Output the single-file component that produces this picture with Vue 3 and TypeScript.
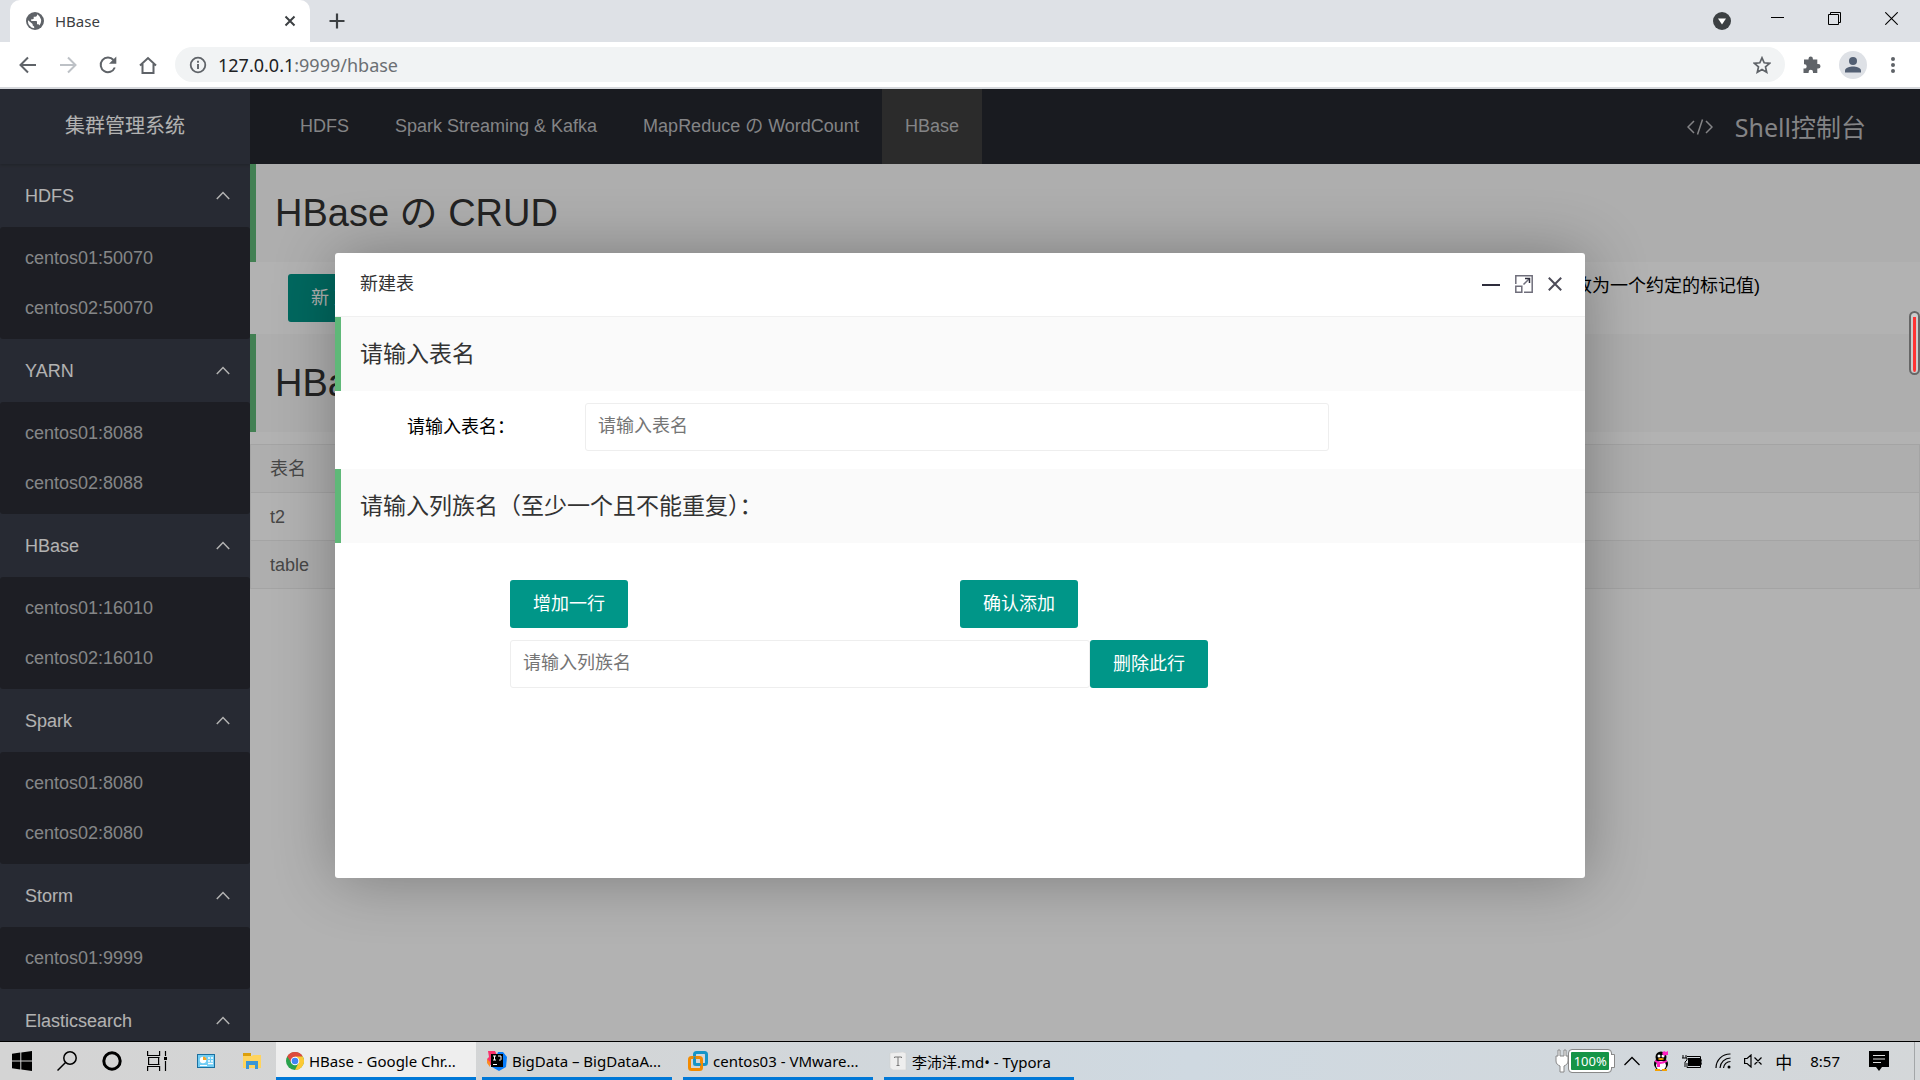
<script setup lang="ts">
import { ref } from 'vue'

interface NavGroup {
  title: string
  nodes: string[]
}

const groups: NavGroup[] = [
  { title: 'HDFS', nodes: ['centos01:50070', 'centos02:50070'] },
  { title: 'YARN', nodes: ['centos01:8088', 'centos02:8088'] },
  { title: 'HBase', nodes: ['centos01:16010', 'centos02:16010'] },
  { title: 'Spark', nodes: ['centos01:8080', 'centos02:8080'] },
  { title: 'Storm', nodes: ['centos01:9999'] },
  { title: 'Elasticsearch', nodes: [] },
]

const menu = ['HDFS', 'Spark Streaming & Kafka', 'MapReduce の WordCount', 'HBase']
const activeMenu = ref('HBase')
const tables = ['t2', 'table']

const tableName = ref('')
const families = ref<string[]>([''])

function addFamily() {
  families.value.push('')
}
function removeFamily(index: number) {
  families.value.splice(index, 1)
}
</script>

<template>
  <div class="desktop">
    <!-- browser tab strip -->
    <div class="tabstrip">
      <div class="tab">
        <svg class="globe" viewBox="0 0 18 18" width="18" height="18">
          <circle cx="9" cy="9" r="9" fill="#5f6368" />
          <path d="M2 8.2 6.6 12v1.2l1.6 1.5v1.6A7.3 7.3 0 0 1 2 8.2ZM11 2.2v.9c0 .9-.7 1.600-1.600 1.600H7.700v1.700c0 .5-.4.8-.9.8H5.200v1.700h5c.5 0 .8.400.8.900v2.500h.9c.7 0 1.300.5 1.500 1.100A7.200 7.200 0 0 0 11 2.200Z" fill="#fff" />
        </svg>
        <span class="tab-title">HBase</span>
        <button class="plain" type="button" aria-label="Close tab">
          <svg viewBox="0 0 12 12" width="12" height="12"><path d="M1.500 1.500l9 9M10.500 1.500l-9 9" stroke="#3c4043" stroke-width="2" /></svg>
        </button>
      </div>
      <button class="plain new-tab" type="button" aria-label="New tab">
        <svg viewBox="0 0 16 16" width="16" height="16"><path d="M8 0.500v15M0.500 8h15" stroke="#3c4043" stroke-width="2.200" /></svg>
      </button>
      <div class="window-controls">
        <svg viewBox="0 0 18 18" width="18" height="18"><circle cx="9" cy="9" r="9" fill="#3c4043" /><path d="M5 6.500h8L9 12.500Z" fill="#fff" /></svg>
        <svg class="win" viewBox="0 0 13 13" width="13" height="13"><path d="M0 5.500h13" stroke="#000" /></svg>
        <svg class="win" viewBox="0 0 13 13" width="13" height="13"><path d="M.5 2.500h10v10h-10zM2.500 2.500v-2h10v10h-2" stroke="#000" fill="none" /></svg>
        <svg class="win" viewBox="0 0 13 13" width="13" height="13"><path d="M.3.3l12.400 12.400M12.700.3L.3 12.700" stroke="#000" stroke-width="1.100" /></svg>
      </div>
    </div>

    <!-- browser toolbar -->
    <div class="toolbar">
      <div class="tool-icons">
        <svg viewBox="0 0 18 18" width="18" height="18"><path d="M17 9H2M9 1.500 1.500 9 9 16.500" fill="none" stroke="#5f6368" stroke-width="2" /></svg>
        <svg viewBox="0 0 18 18" width="18" height="18"><path d="M1 9h15M9 1.500 16.500 9 9 16.500" fill="none" stroke="#bdc1c6" stroke-width="2" /></svg>
        <svg viewBox="0 0 18 18" width="18" height="18"><path d="M15.800 11.500A7.300 7.300 0 1 1 14.500 4" fill="none" stroke="#5f6368" stroke-width="2" /><path d="M17.300.5v7.300H10Z" fill="#5f6368" /></svg>
        <svg viewBox="0 0 18 18" width="18" height="18"><path d="M1 9.500 9 2l8 7.500M3.500 8v9h11V8" fill="none" stroke="#5f6368" stroke-width="2" /></svg>
      </div>
      <div class="omnibox">
        <svg viewBox="0 0 18 18" width="18" height="18"><circle cx="9" cy="9" r="7.300" fill="none" stroke="#5f6368" stroke-width="1.800" /><path d="M9 8v5M9 4.800v1.900" stroke="#5f6368" stroke-width="1.900" /></svg>
        <span class="url">127.0.0.1<span class="path">:9999/hbase</span></span>
        <svg viewBox="0 0 18 18" width="18" height="18"><path d="m9 1.800 2.200 5 5.400.5-4.100 3.600 1.200 5.300L9 13.400l-4.700 2.800 1.200-5.300L1.400 7.300l5.400-.5Z" fill="none" stroke="#5f6368" stroke-width="1.700" /></svg>
      </div>
      <div class="profile">
        <svg viewBox="0 0 18 18" width="18" height="18"><path d="M1 3.500h4.500V2.700a2.200 2.200 0 0 1 4.400 0v.8h4.400V8h1a2.200 2.200 0 0 1 0 4.400h-1V17H10v-1a2.200 2.200 0 0 0-4.400 0v1H.5v-4.400h1a2.200 2.200 0 0 0 0-4.400H1Z" fill="#5f6368" /></svg>
        <svg viewBox="0 0 28 28" width="28" height="28"><circle cx="14" cy="14" r="14" fill="#dee1e6" /><circle cx="14" cy="10" r="4" fill="#525f73" /><path d="M6 21.500v-2c0-2.700 5-4 8-4s8 1.300 8 4v2Z" fill="#525f73" /></svg>
        <svg viewBox="0 0 4 18" width="4" height="18"><circle cx="2" cy="3" r="2" fill="#5f6368" /><circle cx="2" cy="9" r="2" fill="#5f6368" /><circle cx="2" cy="15" r="2" fill="#5f6368" /></svg>
      </div>
    </div>

    <!-- web page -->
    <div class="page">
      <aside class="sidebar">
        <div class="logo">集群管理系统</div>
        <nav>
          <section v-for="group in groups" :key="group.title">
            <a class="group-title" href="#">
              {{ group.title }}
              <svg viewBox="0 0 14 9" width="14" height="9"><path d="M.8 8 7 1.500 13.200 8" fill="none" stroke="#fff" stroke-width="1.500" /></svg>
            </a>
            <div v-if="group.nodes.length" class="group-nodes">
              <a v-for="node in group.nodes" :key="node" href="#">{{ node }}</a>
            </div>
          </section>
        </nav>
      </aside>

      <div class="content">
        <header class="topbar">
          <nav class="menu">
            <a v-for="item in menu" :key="item" href="#" :class="{ active: item === activeMenu }">{{ item }}</a>
          </nav>
          <a class="shell" href="#">
            <svg viewBox="0 0 26 16" width="26" height="16"><path d="M7 2 1 8l6 6M19 2l6 6-6 6M15.500.5l-5 15" fill="none" stroke="currentColor" stroke-width="1.500" /></svg>
            Shell控制台
          </a>
        </header>
        <main>
          <h1>HBase の CRUD</h1>
          <div class="actions">
            <button class="btn" type="button">新 建 表</button>
            <p>改为一个约定的标记值)</p>
          </div>
          <h1>HBase の 表</h1>
          <table>
            <thead><tr><th>表名</th></tr></thead>
            <tbody>
              <tr v-for="name in tables" :key="name"><td>{{ name }}</td></tr>
            </tbody>
          </table>
        </main>
      </div>

      <div class="shade">
        <div class="dialog" role="dialog" aria-labelledby="dialog-title">
          <div class="dialog-head">
            <span id="dialog-title">新建表</span>
            <div class="dialog-tools">
              <button class="plain" type="button" aria-label="最小化"><svg viewBox="0 0 18 18" width="18" height="18"><path d="M0 10h18" stroke="#2e2d3c" stroke-width="2" /></svg></button>
              <button class="plain" type="button" aria-label="最大化"><svg viewBox="0 0 18 18" width="18" height="18" fill="none" stroke="#6f6e7b" stroke-width="1.500"><path d="M.8 9V.8h16.400v16.400H9M.8 11.200h6v6h-6ZM8.500 9.500l6-6" /><path d="M10 3.500h4.500V8" stroke="#2e2d3c" /></svg></button>
              <button class="plain" type="button" aria-label="关闭"><svg viewBox="0 0 14 14" width="14" height="14"><path d="M.8.8l12.400 12.400M13.200.8.8 13.200" stroke="#4c4b58" stroke-width="2" /></svg></button>
            </div>
          </div>
          <h2>请输入表名</h2>
          <div class="form-row">
            <label for="table-name">请输入表名：</label>
            <input id="table-name" v-model="tableName" type="text" placeholder="请输入表名" />
          </div>
          <h2>请输入列族名（至少一个且不能重复）：</h2>
          <div class="families">
            <div class="family-actions">
              <div><button class="btn" type="button" @click="addFamily">增加一行</button></div>
              <div><button class="btn" type="button">确认添加</button></div>
            </div>
            <div v-for="(_, index) in families" :key="index" class="family-row">
              <input v-model="families[index]" type="text" placeholder="请输入列族名" aria-label="请输入列族名" />
              <button class="btn" type="button" @click="removeFamily(index)">删除此行</button>
            </div>
          </div>
        </div>
        <div class="scroll-thumb"></div>
      </div>
    </div>

    <!-- system taskbar -->
    <footer class="taskbar">
      <div class="launchers">
        <svg viewBox="0 0 20 20" width="20" height="20"><path d="M0 2.700 8.300 1.500v8H0ZM9.300 1.400 20 0v9.500H9.300ZM0 10.500h8.300v8L0 17.300ZM9.300 10.500H20V20L9.300 18.600Z" /></svg>
        <svg viewBox="0 0 20 20" width="20" height="20" fill="none" stroke="#000" stroke-width="1.500"><circle cx="13" cy="7" r="6.200" /><path d="M8.500 11.500.5 19.500" /></svg>
        <svg viewBox="0 0 20 20" width="20" height="20" fill="none" stroke="#000" stroke-width="3"><circle cx="10" cy="10" r="8.200" /></svg>
        <svg viewBox="0 0 20 20" width="20" height="20" fill="none" stroke="#000" stroke-width="1.200"><path d="M.6 0v4.500h12V0M.6 20v-4.500h12V20M1.600 6v8M11.600 6v8M1 6.500h11.500M1 13.500h11.500M18.500 0v5M18.500 10v10" /><path d="M17 6h3v3h-3z" fill="#000" stroke="none" /></svg>
        <svg class="panel" viewBox="0 0 18 14" width="18" height="14"><path d="M0 0h18v14H0Z" fill="#1b6f9f" /><path d="M1 1h16v12H1Z" fill="#72cdf4" /><circle cx="6" cy="6" r="3.200" fill="#fff" /><path d="M6 6V2.500A3.500 3.500 0 0 1 9.500 6Z" fill="#f5a623" /><path d="M11 4h2M14 4h2M11 7h2M14 7h2M11 9.500h5" stroke="#fff" stroke-width="1.500" /><path d="M3 11.500h7" stroke="#fff" /></svg>
        <svg class="folder" viewBox="0 0 18 16" width="18" height="16"><path d="M0 0h8v4H0Z" fill="#dc9f0b" /><path d="M0 3h9l1-1h8v13H0Z" fill="#ffd45e" /><path d="M3 16V8h12v8h-3v-4H6v4Z" fill="#3b96d7" /></svg>
      </div>
      <div class="tasks">
        <button class="task current" type="button">
          <svg viewBox="0 0 18 18" width="18" height="18"><circle cx="9" cy="9" r="9" fill="#2aa24c" /><path d="M1.200 4.500A9 9 0 0 1 16.800 4.500L9 5.500 5 10Z" fill="#dd4b3e" /><path d="M16.800 4.500A9 9 0 0 1 9 18l4-8-4-5.500Z" fill="#fcc934" /><circle cx="9" cy="9" r="4.300" fill="#fff" /><circle cx="9" cy="9" r="3.300" fill="#4285f4" /></svg>
          <span>HBase - Google Chr...</span>
        </button>
        <button class="task" type="button">
          <svg viewBox="0 0 20 20" width="20" height="20"><path d="M1 0h7l3 6-6 9-4-3-1-4 2-2Z" fill="#fb2f6b" /><path d="m11 1 5 0 4 5-1 10-7 4-7-4Z" fill="#087cfa" /><path d="M0 8l3 3v5l-3-4Z" fill="#fc8a22" /><path d="M4 3h12v13H4Z" /><path d="M6 5h3M7.500 5v4M6 9h3M11 5h3v3.500c0 .7-1 .7-2 .5M6 13.500h4" stroke="#fff" fill="none" /></svg>
          <span>BigData – BigDataA...</span>
        </button>
        <button class="task" type="button">
          <svg viewBox="0 0 20 20" width="20" height="20" fill="none" stroke-width="3"><rect x="6.500" y="1.500" width="12" height="12" rx="2" stroke="#1695c8" /><rect x="1.500" y="6.500" width="12" height="12" rx="2" stroke="#f38b00" /><path d="M6.500 5.500v8H13" stroke="#1695c8" stroke-width="2" /></svg>
          <span>centos03 - VMware...</span>
        </button>
        <button class="task" type="button">
          <svg viewBox="0 0 18 18" width="18" height="18"><path d="M1 1l13-1 3 1v17H4l-3-2Z" fill="#eee" stroke="#d2d2d2" stroke-width=".6" /><path d="M5.500 6V5h7v1M9 5v8.500M7.500 13.500h3" fill="none" stroke="#777" /></svg>
          <span>李沛洋.md• - Typora</span>
        </button>
      </div>
      <div class="tray">
        <div class="battery">
          <svg viewBox="0 0 14 24" width="14" height="24"><path d="M3 1v6H1v5c0 3 2 4 4 5v6h4v-6c2-1 4-2 4-5V7h-2V1H9v6H5V1Z" fill="#fff" stroke="#888" /></svg>
          <span>100%</span>
          <svg viewBox="0 0 4 14" width="4" height="14"><path d="M0 .5h3.500v13H0" fill="#fff" stroke="#888" /></svg>
        </div>
        <svg viewBox="0 0 16 10" width="16" height="10"><path d="M.5 9 8 1.500 15.500 9" fill="none" stroke="#000" stroke-width="1.300" /></svg>
        <svg viewBox="0 0 16 20" width="16" height="20"><ellipse cx="8" cy="13" rx="7" ry="6.500" /><circle cx="8" cy="6" r="5.500" /><ellipse cx="8" cy="14.500" rx="5" ry="4.500" fill="#fff" /><circle cx="6" cy="5" r="1.500" fill="#fff" /><circle cx="10" cy="5" r="1.500" fill="#fff" /><ellipse cx="8" cy="8" rx="3" ry="1" fill="#f5a100" /><path d="M2 9q6 3.500 12 0v2q-4 2-7 2v3H4v-4L2 11ZM9 2l2-2 2 1 2-1v4l-2 0-2 1Z" fill="#ff1fc0" /><path d="M2 18h5v2H2ZM9 18h5v2H9Z" fill="#f5a100" /></svg>
        <svg viewBox="0 0 20 14" width="20" height="14"><path d="M6 4h12v8H6Z" /><path d="M5 2.500h13.500v11H5V9M19 6h1v4h-1M1 1v3M4 1v3M0 4h5v2L3 8v5" fill="none" stroke="#000" /></svg>
        <svg viewBox="0 0 16 16" width="16" height="16" fill="none" stroke="#000" stroke-width="1.200"><path d="M1 15A14 14 0 0 1 15.500 1M5 15A10.500 10.500 0 0 1 15.500 5M8.500 15a7 7 0 0 1 7-6.500" /><circle cx="14" cy="14" r="1.500" fill="#000" stroke="none" /></svg>
        <svg viewBox="0 0 18 14" width="18" height="14" fill="none" stroke="#000" stroke-width="1.200"><path d="M.6 4.500h2.500L7 1v12L3.100 9.500H.6ZM10.500 3.500l7 7M17.500 3.500l-7 7" /></svg>
        <span class="ime">中</span>
        <time>8:57</time>
        <svg viewBox="0 0 20 20" width="20" height="20"><path d="M0 0h20v16h-7l-3 4-3-4H0Z" /><path d="M4 4.500h12M4 8h12M4 11.500h8" stroke="#ddd" stroke-width="1.200" /></svg>
        <i class="peek"></i>
      </div>
    </footer>
  </div>
</template>

<style>
body {
  overflow: hidden;
}
</style>

<style scoped>
* {
  box-sizing: border-box;
}
a {
  color: inherit;
  text-decoration: none;
}
svg {
  display: block;
  flex: none;
}
h1,
h2,
p {
  margin: 0;
  font-weight: 400;
}
button,
input {
  font: inherit;
}
.plain {
  padding: 0;
  border: 0;
  background: none;
}
.desktop {
  display: flex;
  flex-direction: column;
  height: 100vh;
  overflow: hidden;
  font-family: 'Noto Sans', 'Noto Sans CJK SC', sans-serif;
}

/* browser chrome */
.tabstrip {
  display: flex;
  flex: none;
  align-items: center;
  height: 42px;
  padding-left: 10px;
  background: #dee1e6;
}
.tab {
  display: flex;
  align-items: center;
  width: 300px;
  height: 42px;
  padding: 0 14px 0 16px;
  border-radius: 10px 10px 0 0;
  background: #fff;
}
.tab-title {
  flex: 1;
  padding-left: 11px;
  color: #3c4043;
  font-size: 15px;
}
.new-tab {
  margin-left: 19px;
}
.window-controls {
  display: flex;
  align-items: center;
  margin-left: auto;
  padding-right: 22px;
}
.win {
  margin: 0 0 6px 44px;
}
.window-controls .win:nth-child(2) {
  margin-left: 40px;
}
.toolbar {
  display: flex;
  flex: none;
  align-items: center;
  height: 47px;
  border-bottom: 2px solid #d6d8dc;
  background: #fff;
}
.tool-icons {
  display: flex;
  gap: 22px;
  padding: 0 18px 0 19px;
}
.omnibox {
  display: flex;
  flex: 1;
  align-items: center;
  height: 35px;
  padding: 0 14px;
  border-radius: 18px;
  background: #f1f3f4;
}
.url {
  flex: 1;
  padding-left: 11px;
  color: #202124;
  font-size: 18px;
  line-height: 24px;
}
.path {
  color: #6b6f73;
}
.profile {
  display: flex;
  align-items: center;
  gap: 18px;
  padding: 0 25px 0 18px;
}
.profile svg:last-child {
  margin-left: 6px;
}

/* page */
.page {
  position: relative;
  display: flex;
  flex: 1;
  min-height: 0;
  overflow: hidden;
  background: #fff;
  font-family: 'Liberation Sans', 'Noto Sans CJK SC', sans-serif;
  font-size: 18px;
  line-height: 24px;
}
.sidebar {
  flex: none;
  width: 250px;
  overflow: hidden;
  background: #393d49;
  color: #fff;
}
.logo {
  height: 75px;
  box-shadow: 0 1px 3px rgba(0, 0, 0, 0.2);
  font-size: 20px;
  line-height: 75px;
  text-align: center;
}
.group-title {
  display: flex;
  align-items: center;
  justify-content: space-between;
  height: 63px;
  padding: 0 20px 0 25px;
  line-height: 62px;
}
.group-nodes {
  padding: 6px 0;
  border-radius: 3px;
  background: #2a2c34;
}
.group-nodes a {
  display: block;
  padding-left: 25px;
  color: #bfc0c2;
  line-height: 50px;
}
.content {
  flex: 1;
  min-width: 0;
}
.topbar {
  display: flex;
  justify-content: space-between;
  height: 75px;
  padding: 0 54px 0 27px;
  background: #25272e;
  color: #bdbec0;
}
.menu {
  display: flex;
}
.menu a {
  padding: 0 23px;
  line-height: 75px;
}
.menu .active {
  background: #3e3e3e;
}
.shell {
  display: flex;
  align-items: center;
  gap: 22px;
  font-family: 'Noto Sans', 'Noto Sans CJK SC', sans-serif;
  font-size: 25px;
}
h1 {
  height: 98px;
  padding-left: 19px;
  border-left: 6px solid #5fb878;
  background: #fafafa;
  color: #333;
  font-size: 38px;
  line-height: 98px;
}
.actions {
  display: flex;
  align-items: flex-start;
  justify-content: space-between;
  padding: 12px 160px 12px 38px;
}
.btn {
  flex: none;
  height: 48px;
  padding: 0 23px;
  border: 0;
  border-radius: 3px;
  background: #009688;
  color: #fff;
  white-space: nowrap;
}
table {
  width: 100%;
  margin-top: 12px;
  border-collapse: collapse;
  color: #666;
}
th,
td {
  height: 48px;
  padding: 0 19px;
  border: 1px solid #ebebeb;
  font-weight: 400;
  text-align: left;
}
thead tr,
tbody tr:nth-child(even) {
  background: #fafafa;
}

/* modal dialog */
.shade {
  position: absolute;
  inset: 0;
  display: flex;
  align-items: center;
  justify-content: center;
  background: rgba(0, 0, 0, 0.3);
}
.dialog {
  width: 1250px;
  max-width: 90%;
  min-height: 625px;
  border-radius: 3px;
  background: #fff;
  box-shadow: 1px 1px 62px rgba(0, 0, 0, 0.3);
}
.dialog-head {
  display: flex;
  align-items: center;
  justify-content: space-between;
  height: 64px;
  padding: 0 23px 0 25px;
  border-bottom: 1px solid #f0f0f0;
  color: #333;
}
.dialog-tools {
  display: flex;
  align-items: center;
  gap: 15px;
}
h2 {
  height: 74px;
  padding-left: 19px;
  border-left: 6px solid #5fb878;
  background: #fafafa;
  color: #333;
  font-size: 23px;
  line-height: 74px;
}
.form-row {
  display: flex;
  align-items: center;
  padding: 12px 256px 18px 72px;
}
label {
  width: 178px;
}
input {
  flex: 1;
  min-width: 0;
  height: 48px;
  padding: 0 12px;
  border: 1px solid #eee;
  border-radius: 3px;
  outline: none;
}
input::placeholder {
  color: #757575;
}
.families {
  padding: 37px 0 0 175px;
}
.family-actions,
.family-row {
  display: flex;
}
.family-actions {
  margin-bottom: 12px;
}
.family-actions div {
  width: 450px;
}
.family-row {
  margin-right: 377px;
}
.scroll-thumb {
  position: absolute;
  top: 222px;
  right: 0;
  width: 11px;
  height: 64px;
  padding: 4px 2px 1px;
  border: 2px solid #666;
  border-radius: 6px;
  background: linear-gradient(#f33, #f33) content-box, #ccc;
}

/* taskbar */
.taskbar {
  display: flex;
  flex: none;
  align-items: stretch;
  height: 39px;
  border-top: 1px solid #000;
  background: linear-gradient(90deg, #d4d4d4, #d3d5d6 30%, #cfd9e1 62%, #d4d7d9);
  font-size: 15px;
}
.launchers {
  display: flex;
  align-items: center;
  gap: 25px;
  padding: 0 15px 0 12px;
}
.launchers .panel {
  margin-left: 5px;
}
.launchers .folder {
  margin-left: 3px;
}
.tasks {
  display: flex;
  gap: 1px;
}
.task {
  display: flex;
  align-items: center;
  gap: 5px;
  width: 200px;
  padding: 0 10px;
  border: 0;
  background: linear-gradient(#0078d7, #0078d7) center bottom / 190px 3px no-repeat;
  color: #000;
  font-size: 15px;
  white-space: nowrap;
}
.task.current {
  background: linear-gradient(#0078d7, #0078d7) center bottom / 200px 3px no-repeat, #eee;
}
.tray {
  display: flex;
  align-items: center;
  gap: 13px;
  margin-left: auto;
  padding-right: 5px;
}
.battery {
  display: flex;
  align-items: center;
  margin-right: -4px;
}
.battery span {
  width: 42px;
  border: 2px solid #fff;
  outline: 1px solid #888;
  border-radius: 3px;
  background: #159447;
  color: #fff;
  font-size: 13px;
  line-height: 18px;
  text-align: center;
}
.ime {
  font-size: 17px;
}
time {
  margin: 0 16px 0 5px;
}
.peek {
  width: 1px;
  height: 38px;
  margin-left: 12px;
  background: #a3a6a8;
}
</style>
